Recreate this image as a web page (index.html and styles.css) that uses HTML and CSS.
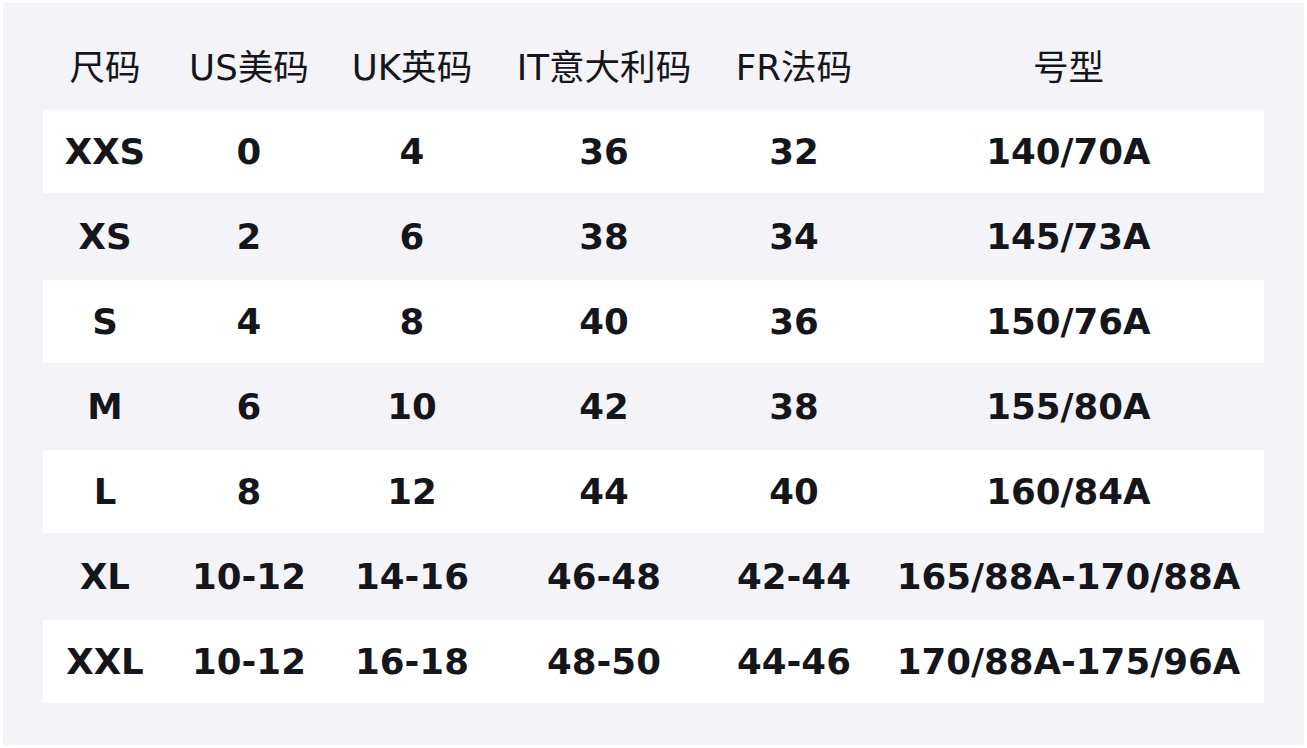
FILE: index.html
```html
<!DOCTYPE html>
<html lang="zh-CN">
<head>
<meta charset="utf-8">
<title>尺码表</title>
<link rel="stylesheet" href="styles.css">
</head>
<body>
<div class="panel">
  <table class="sizes">
    <colgroup>
      <col class="c1"><col class="c2"><col class="c3"><col class="c4"><col class="c5"><col class="c6">
    </colgroup>
    <thead>
      <tr class="head"><th>尺码</th><th>US美码</th><th>UK英码</th><th>IT意大利码</th><th>FR法码</th><th>号型</th></tr>
    </thead>
    <tbody>
      <tr class="light"><td>XXS</td><td>0</td><td>4</td><td>36</td><td>32</td><td>140/70A</td></tr>
      <tr class="dark"><td>XS</td><td>2</td><td>6</td><td>38</td><td>34</td><td>145/73A</td></tr>
      <tr class="light"><td>S</td><td>4</td><td>8</td><td>40</td><td>36</td><td>150/76A</td></tr>
      <tr class="dark"><td>M</td><td>6</td><td>10</td><td>42</td><td>38</td><td>155/80A</td></tr>
      <tr class="light"><td>L</td><td>8</td><td>12</td><td>44</td><td>40</td><td>160/84A</td></tr>
      <tr class="dark"><td>XL</td><td>10-12</td><td>14-16</td><td>46-48</td><td>42-44</td><td>165/88A-170/88A</td></tr>
      <tr class="light"><td>XXL</td><td>10-12</td><td>16-18</td><td>48-50</td><td>44-46</td><td>170/88A-175/96A</td></tr>
    </tbody>
  </table>
</div>
</body>
</html>
```

FILE: styles.css
```css
html, body {
  margin: 0;
  padding: 0;
  background: #ffffff;
}
body {
  padding: 3px;
  box-sizing: border-box;
  width: 1307px;
  height: 748px;
}
.panel {
  background: #f3f3f8;
  height: 742px;
  box-sizing: border-box;
  padding: 22px 40px 0 40px;
}
.sizes {
  width: 1221px;
  border-collapse: collapse;
  border-spacing: 0;
  table-layout: fixed;
  color: #15151c;
}
.c1 { width: 124px; }
.c2 { width: 164px; }
.c3 { width: 162px; }
.c4 { width: 222px; }
.c5 { width: 158px; }
.c6 { width: 391px; }
.sizes th, .sizes td {
  padding: 0;
  text-align: center;
  vertical-align: middle;
  white-space: nowrap;
  font-size: 35.6px;
  line-height: 1;
}
.sizes th {
  font-family: "DejaVu Sans", "Noto Sans CJK SC", sans-serif;
  font-weight: normal;
}
.sizes td {
  font-family: "DejaVu Sans", sans-serif;
  font-weight: bold;
}
.head { height: 85px; }
.light { height: 83px; background: #ffffff; }
.dark { height: 87px; }
```
